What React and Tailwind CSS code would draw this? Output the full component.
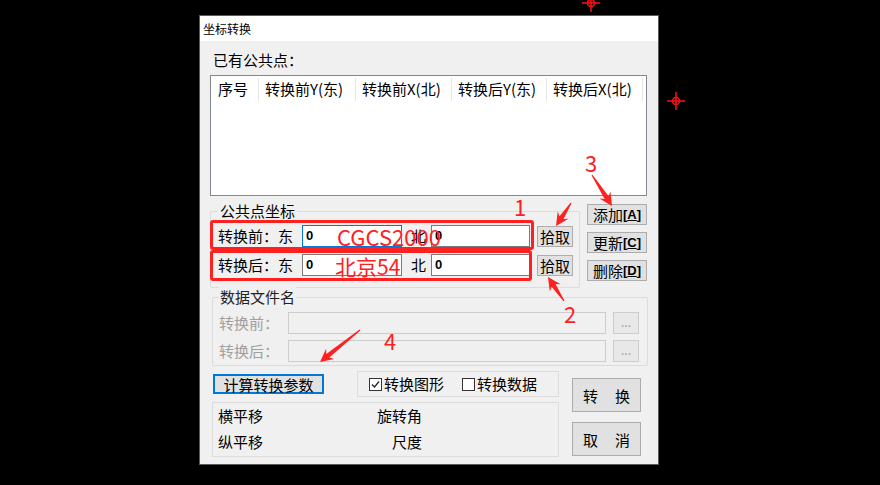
import React from 'react';

const font = { fontFamily: '"Noto Sans CJK SC", "Noto Sans", sans-serif' };

const arrows = [
  [571, 203, 556, 226],
  [564, 301, 548, 277],
  [592, 175, 612, 206],
  [360, 330, 320, 362],
];

function arrowPoints([x1, y1, x2, y2]) {
  const dx = x2 - x1;
  const dy = y2 - y1;
  const len = Math.hypot(dx, dy);
  const ux = dx / len;
  const uy = dy / len;
  const nx = -uy;
  const ny = ux;
  const p = (along, side) => [x2 - ux * along + nx * side, y2 - uy * along + ny * side];
  const pts = [
    [x1 + nx * 0.6, y1 + ny * 0.6],
    p(10, 2.4),
    p(13, 6.5),
    [x2, y2],
    p(13, -6.5),
    p(10, -2.4),
    [x1 - nx * 0.6, y1 - ny * 0.6],
  ];
  return pts.map(([a, b]) => `${a.toFixed(1)},${b.toFixed(1)}`).join(' ');
}

function Crosshair({ x, y }) {
  return (
    <g stroke="#ff1010" strokeWidth="1.5" fill="none">
      <circle cx={x} cy={y} r="3.5" />
      <line x1={x - 9} y1={y} x2={x + 9} y2={y} />
      <line x1={x} y1={y - 9} x2={x} y2={y + 9} />
    </g>
  );
}

function Btn({ children, className = '' }) {
  return (
    <div className={`flex items-center justify-center bg-[#e1e1e1] border border-[#adadad] text-[15px] leading-none text-black ${className}`}>
      {children}
    </div>
  );
}

function Hotkey({ label, k }) {
  return (
    <>
      <span>{label}</span>
      <span className="text-[13px] font-bold" style={{ fontFamily: '"Liberation Sans", sans-serif' }}>
        [<span className="underline">{k}</span>]
      </span>
    </>
  );
}

function ValueInput({ focused, w }) {
  return (
    <div className={`h-[22px] ${w} bg-white border flex items-center pl-[3px] ${focused ? 'border-[#0078d7]' : 'border-[#7a7a7a]'}`}>
      <span className="text-[13px] font-bold" style={{ fontFamily: '"Liberation Sans", sans-serif' }}>0</span>
    </div>
  );
}

function Checkbox({ checked }) {
  return (
    <div className="w-[13px] h-[13px] border border-[#333] bg-white flex items-center justify-center">
      {checked && (
        <svg width="11" height="11" viewBox="0 0 11 11">
          <path d="M2 5.5 L4.5 8 L9 2.5" stroke="#222" strokeWidth="1.3" fill="none" />
        </svg>
      )}
    </div>
  );
}

export default function App() {
  const columns = [
    ['序号', 'w-[48px] pl-[7px]'],
    ['转换前Y(东)', 'w-[97px] pl-[6px]'],
    ['转换前X(北)', 'w-[96px] pl-[6px]'],
    ['转换后Y(东)', 'w-[95px] pl-[6px]'],
    ['转换后X(北)', 'w-[96px] pl-[6px]'],
  ];

  return (
    <div className="relative w-[880px] h-[485px] bg-black overflow-hidden pt-[15px] pl-[199px]" style={font}>
      {/* Dialog */}
      <div className="w-[460px] h-[450px] border border-[#5a5a5a] bg-[#f0f0f0] flex flex-col text-black">
        <div className="h-[25px] bg-white flex items-center pl-[3px] text-[12px]">坐标转换</div>

        <div className="flex flex-col pl-[10px]">
          <div className="mt-[9px] ml-[3px] h-[20px] leading-[20px] text-[15px]">已有公共点：</div>

          {/* list */}
          <div className="mt-[5px] w-[437px] h-[121px] border border-[#828790] bg-white">
            <div className="flex h-[26px] pt-[2px]">
              {columns.map(([t, c]) => (
                <div key={t} className={`${c} h-[23px] flex items-center border-r border-[#e5e5e5] text-[15px] whitespace-nowrap`}>
                  {t}
                </div>
              ))}
            </div>
          </div>

          {/* common points */}
          <div className="flex mt-[8px]">
            <div className="relative mt-[7px] w-[370px] h-[77px] border border-[#dcdcdc] rounded-[2px]">
              <span className="absolute -top-[11px] left-[7px] px-[2px] bg-[#f0f0f0] text-[15px] leading-[20px]">公共点坐标</span>
              <div className="flex items-center mt-[13px] pl-[7px] h-[22px] text-[15px]">
                <span className="w-[84px]">转换前：东</span>
                <ValueInput focused w="w-[100px]" />
                <span className="w-[29px] pl-[9px]">北</span>
                <ValueInput w="w-[99px]" />
                <Btn className="ml-[7px] w-[36px] h-[21px]">拾取</Btn>
              </div>
              <div className="flex items-center mt-[7px] pl-[7px] h-[22px] text-[15px]">
                <span className="w-[84px]">转换后：东</span>
                <ValueInput w="w-[100px]" />
                <span className="w-[29px] pl-[9px]">北</span>
                <ValueInput w="w-[99px]" />
                <Btn className="ml-[7px] w-[36px] h-[21px]">拾取</Btn>
              </div>
            </div>
            <div className="ml-[7px] flex flex-col gap-[7px]">
              <Btn className="w-[60px] h-[21px]"><Hotkey label="添加" k="A" /></Btn>
              <Btn className="w-[60px] h-[21px]"><Hotkey label="更新" k="C" /></Btn>
              <Btn className="w-[60px] h-[21px]"><Hotkey label="删除" k="D" /></Btn>
            </div>
          </div>

          {/* data files */}
          <div className="relative mt-[9px] ml-[2px] w-[436px] h-[69px] border border-[#dcdcdc] rounded-[2px]">
            <span className="absolute -top-[11px] left-[6px] px-[1px] bg-[#f0f0f0] text-[15px] leading-[20px] text-[#222]">数据文件名</span>
            {['转换前：', '转换后：'].map((t, i) => (
              <div key={t} className={`flex items-center pl-[6px] h-[22px] ${i === 0 ? 'mt-[14px]' : 'mt-[6px]'}`}>
                <span className="w-[69px] text-[15px] text-[#a0a0a0]">{t}</span>
                <div className="w-[318px] h-[22px] border border-[#cccccc] bg-[#f0f0f0]" />
                <div className="ml-[7px] w-[26px] h-[22px] border border-[#cccccc] bg-[#e8e8e8] flex items-center justify-center text-[12px] text-[#a0a0a0] leading-none pb-[2px]">
                  ...
                </div>
              </div>
            ))}
          </div>

          {/* bottom */}
          <div className="flex mt-[5px] ml-[2px]">
            <div className="w-[347px] flex flex-col">
              <div className="flex items-center h-[26px]">
                <div className="ml-[1px] w-[111px] h-[20px] border-2 border-[#0078d7] bg-[#e1e1e1] flex items-center justify-center text-[15px] leading-none">
                  计算转换参数
                </div>
                <div className="ml-auto w-[202px] h-[26px] border border-[#dcdcdc] flex items-center text-[15px]">
                  <div className="ml-[11px]"><Checkbox checked /></div>
                  <span className="ml-[2px]">转换图形</span>
                  <div className="ml-[18px]"><Checkbox /></div>
                  <span className="ml-[2px]">转换数据</span>
                </div>
              </div>
              <div className="mt-[5px] w-[347px] h-[55px] border border-[#dcdcdc] pt-[3px] text-[15px]">
                <div className="flex h-[20px] items-center">
                  <span className="pl-[5px] w-[150px]">横平移</span>
                  <span className="w-[59px] text-right">旋转角</span>
                </div>
                <div className="flex h-[20px] items-center mt-[6px]">
                  <span className="pl-[5px] w-[150px]">纵平移</span>
                  <span className="w-[59px] text-right">尺度</span>
                </div>
              </div>
            </div>
            <div className="ml-[13px] flex flex-col">
              <Btn className="mt-[7px] w-[69px] h-[34px] !justify-between px-[10px]"><span>转</span><span>换</span></Btn>
              <Btn className="mt-[10px] w-[69px] h-[34px] !justify-between px-[10px]"><span>取</span><span>消</span></Btn>
            </div>
          </div>
        </div>
      </div>

      {/* annotations */}
      <div className="absolute left-[210px] top-[220px] w-[324px] h-[30px] border-[3px] border-[#ff2020] rounded-[3px]" />
      <div className="absolute left-[210px] top-[250px] w-[322px] h-[31px] border-[3px] border-[#ff2020] rounded-[3px]" />
      <span className="absolute left-[337px] top-[221px] text-[22px] leading-[30px] text-[#ff2020]">CGCS2000</span>
      <span className="absolute left-[335px] top-[250px] text-[21px] leading-[32px] text-[#ff2020]">北京54</span>
      <span className="absolute left-[514px] top-[192px] text-[22px] leading-[28px] text-[#ff2020]">1</span>
      <span className="absolute left-[564px] top-[299px] text-[22px] leading-[28px] text-[#ff2020]">2</span>
      <span className="absolute left-[585px] top-[148px] text-[22px] leading-[28px] text-[#ff2020]">3</span>
      <span className="absolute left-[384px] top-[326px] text-[22px] leading-[28px] text-[#ff2020]">4</span>

      <svg className="absolute inset-0 pointer-events-none" width="880" height="485">
        {arrows.map((a, i) => (
          <polygon key={i} points={arrowPoints(a)} fill="#ff2020" />
        ))}
        <Crosshair x={591} y={3} />
        <Crosshair x={676} y={101} />
      </svg>
    </div>
  );
}
